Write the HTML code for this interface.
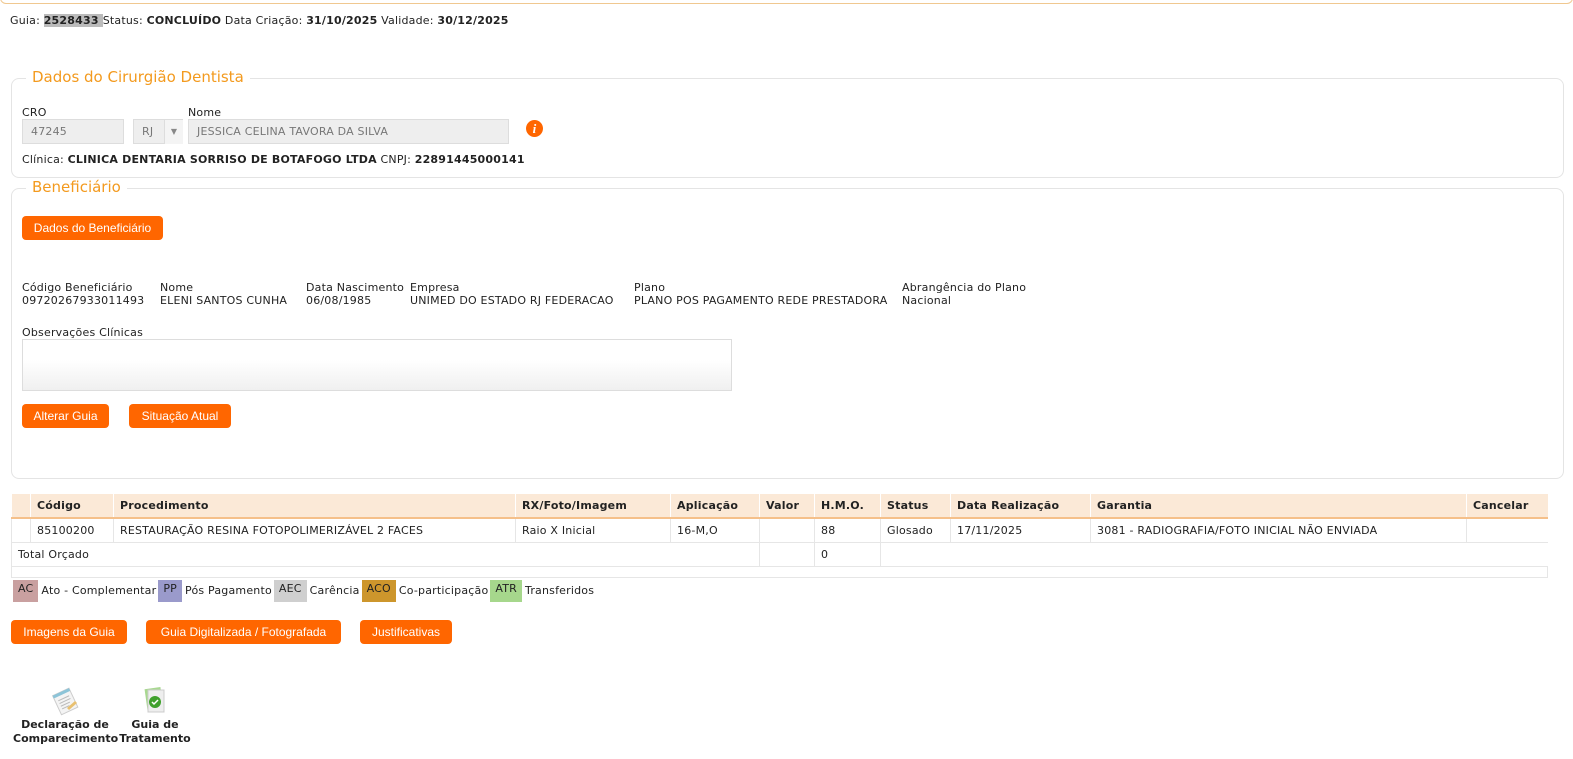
<!DOCTYPE html>
<html><head><meta charset="utf-8"><style>
*{box-sizing:border-box;margin:0;padding:0}
body{width:1573px;height:759px;background:#fff;font-family:"DejaVu Sans","Liberation Sans",sans-serif;font-size:11px;color:#222;position:relative;overflow:hidden;letter-spacing:0.2px}
.a{position:absolute;white-space:nowrap}
.fs{position:absolute;border:1px solid #e4e4e4;border-radius:8px}
.lg{position:absolute;background:#fff;color:#f39a1e;font-size:15px;padding:0 6px;letter-spacing:0}
.btn{position:absolute;background:#ff6600;color:#fff;border-radius:4px;height:24px;line-height:24px;text-align:center;font-family:"Liberation Sans",sans-serif;font-size:12px;letter-spacing:0}
.inp{position:absolute;background:#eee;border:1px solid #ddd;color:#777;height:25px;line-height:23px;padding-left:8px}
table{position:absolute;left:11px;top:494px;width:1537px;border-collapse:collapse}
td,th{height:24px;padding:0 6px;text-align:left;border-left:1px solid #e6e6e6;border-bottom:1px solid #e6e6e6;white-space:nowrap}
th{background:#fbe9d7;border-bottom:2px solid #f5c08a;border-left:1px solid #fff;font-weight:bold}
.k{display:inline-block;height:22px;padding:0 5px;vertical-align:middle;line-height:18px;margin-right:3px}
.t{margin-right:2px}
</style></head><body>
<div class="a" style="left:0;top:-10px;width:1573px;height:14px;border:1px solid #f0c890;border-top:none;border-radius:0 0 6px 6px"></div>
<div class="a" style="left:10px;top:14px">Guia: <b style="background:#bbb">2528433 </b>Status: <b>CONCLUÍDO</b> Data Criação: <b>31/10/2025</b> Validade: <b>30/12/2025</b></div>

<div class="fs" style="left:11px;top:78px;width:1553px;height:100px"></div>
<div class="lg" style="left:26px;top:68px">Dados do Cirurgião Dentista</div>
<div class="a" style="left:22px;top:106px">CRO</div>
<div class="inp" style="left:22px;top:119px;width:102px">47245</div>
<div class="inp" style="left:133px;top:119px;width:50px">RJ</div>
<div class="a" style="left:164px;top:120px;width:19px;height:24px;border-left:1px solid #ddd;background:#f4f4f4;color:#888;font-size:8px;text-align:center;line-height:23px">▼</div>
<div class="a" style="left:188px;top:106px">Nome</div>
<div class="inp" style="left:188px;top:119px;width:321px">JESSICA CELINA TAVORA DA SILVA</div>
<div class="a" style="left:526px;top:120px;width:17px;height:17px;border-radius:50%;background:#ff6600;color:#fff;font-weight:bold;font-style:italic;text-align:center;line-height:17px;font-family:'Liberation Serif',serif;font-size:13px">i</div>
<div class="a" style="left:22px;top:153px">Clínica: <b>CLINICA DENTARIA SORRISO DE BOTAFOGO LTDA</b> CNPJ: <b>22891445000141</b></div>

<div class="fs" style="left:11px;top:188px;width:1553px;height:291px"></div>
<div class="lg" style="left:26px;top:178px">Beneficiário</div>
<div class="btn" style="left:22px;top:216px;width:141px">Dados do Beneficiário</div>
<div class="a" style="left:22px;top:281px;line-height:13px">Código Beneficiário<br>09720267933011493</div>
<div class="a" style="left:160px;top:281px;line-height:13px">Nome<br>ELENI SANTOS CUNHA</div>
<div class="a" style="left:306px;top:281px;line-height:13px">Data Nascimento<br>06/08/1985</div>
<div class="a" style="left:410px;top:281px;line-height:13px">Empresa<br>UNIMED DO ESTADO RJ FEDERACAO</div>
<div class="a" style="left:634px;top:281px;line-height:13px">Plano<br>PLANO POS PAGAMENTO REDE PRESTADORA</div>
<div class="a" style="left:902px;top:281px;line-height:13px">Abrangência do Plano<br>Nacional</div>
<div class="a" style="left:22px;top:326px">Observações Clínicas</div>
<div class="a" style="left:22px;top:339px;width:710px;height:52px;border:1px solid #ddd;background:linear-gradient(#fff 40%,#f0f0f0)"></div>
<div class="btn" style="left:22px;top:404px;width:87px">Alterar Guia</div>
<div class="btn" style="left:129px;top:404px;width:102px">Situação Atual</div>

<table>
<tr><th style="width:19px"></th><th style="width:83px">Código</th><th style="width:402px">Procedimento</th><th style="width:155px">RX/Foto/Imagem</th><th style="width:89px">Aplicação</th><th style="width:55px">Valor</th><th style="width:66px">H.M.O.</th><th style="width:70px">Status</th><th style="width:140px">Data Realização</th><th style="width:376px">Garantia</th><th>Cancelar</th></tr>
<tr><td></td><td>85100200</td><td>RESTAURAÇÃO RESINA FOTOPOLIMERIZÁVEL 2 FACES</td><td>Raio X Inicial</td><td>16-M,O</td><td></td><td>88</td><td>Glosado</td><td>17/11/2025</td><td>3081 - RADIOGRAFIA/FOTO INICIAL NÃO ENVIADA</td><td></td></tr>
<tr><td colspan="5" style="border-left:1px solid #e6e6e6">Total Orçado</td><td></td><td>0</td><td colspan="4"></td></tr>
<tr><td colspan="11" style="height:11px;border-right:1px solid #e6e6e6"></td></tr>
</table>
<div class="a" style="left:13px;top:580px;line-height:22px"><span class="k" style="background:#c9a0a0">AC</span><span class="t">Ato - Complementar</span><span class="k" style="background:#9a9acb">PP</span><span class="t">Pós Pagamento</span><span class="k" style="background:#cfcfcf">AEC</span><span class="t">Carência</span><span class="k" style="background:#cd962c">ACO</span><span class="t">Co-participação</span><span class="k" style="background:#a6d78c">ATR</span>Transferidos</div>
<div class="btn" style="left:11px;top:620px;width:116px">Imagens da Guia</div>
<div class="btn" style="left:146px;top:620px;width:195px">Guia Digitalizada / Fotografada</div>
<div class="btn" style="left:360px;top:620px;width:92px">Justificativas</div>

<svg class="a" style="left:50px;top:686px" width="30" height="30" viewBox="0 0 30 30"><g transform="rotate(-25 15 15)"><rect x="6" y="5" width="18" height="21" fill="#f4f4f4" stroke="#ccc"/><rect x="6" y="5" width="18" height="3" fill="#8cc4d8"/><path d="M9 12h12M9 15h12M9 18h10M9 21h8" stroke="#bbb"/></g><path d="M17 22l8-7 2 2-8 7z" fill="#e8c070"/></svg>
<svg class="a" style="left:142px;top:686px" width="26" height="28" viewBox="0 0 26 28"><rect x="4" y="2" width="16" height="22" fill="#a8d890" transform="rotate(-8 12 13)"/><rect x="6" y="4" width="16" height="22" fill="#eee" stroke="#ccc"/><circle cx="13" cy="16" r="6" fill="#3fa02c"/><path d="M10 16l2 2 4-4" stroke="#fff" stroke-width="1.5" fill="none"/></svg>
<div class="a" style="left:13px;top:718px;font-weight:bold;text-align:center;line-height:14px;width:104px;letter-spacing:0">Declaração de<br>Comparecimento</div>
<div class="a" style="left:118px;top:718px;font-weight:bold;text-align:center;line-height:14px;width:74px;letter-spacing:0">Guia de<br>Tratamento</div>
</body></html>
